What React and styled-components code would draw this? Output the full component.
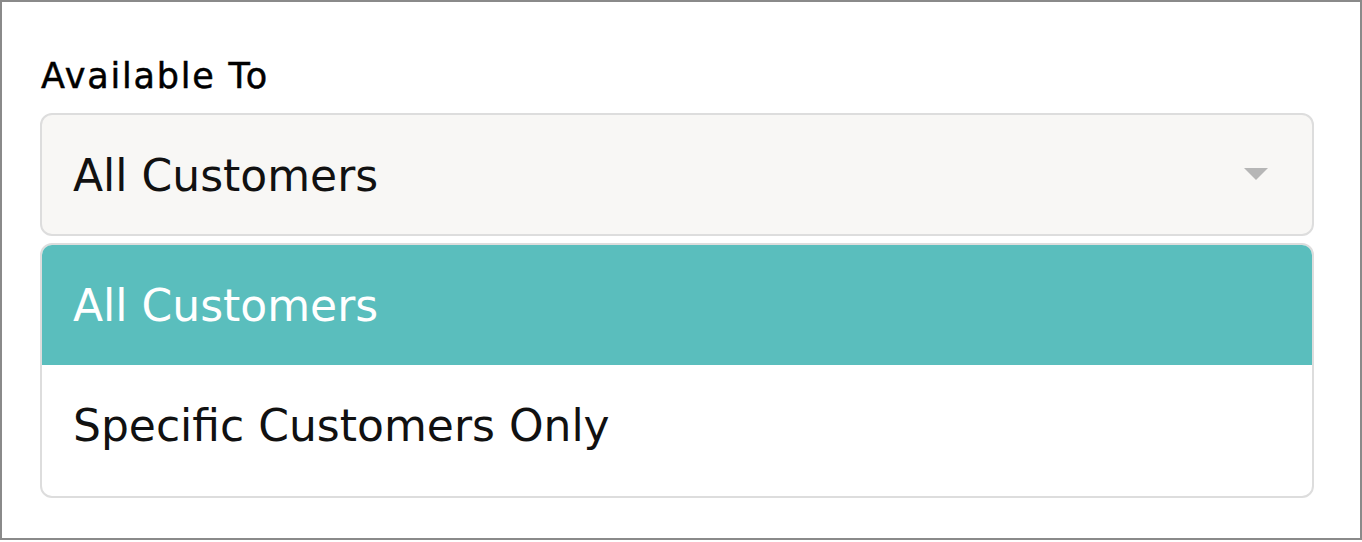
import styled, { createGlobalStyle } from "styled-components";

const GlobalStyle = createGlobalStyle`
  html, body {
    margin: 0;
    padding: 0;
    background: #fff;
  }
  body {
    font-family: "DejaVu Sans", "Noto Sans", sans-serif;
    color: #000;
  }
`;

const Frame = styled.div`
  box-sizing: border-box;
  width: 1362px;
  height: 540px;
  border: 2px solid #8a8a8a;
  padding: 50px 46px 0 38px;
`;

const Label = styled.div`
  font-size: 35px;
  line-height: 48px;
  letter-spacing: 1.8px;
  -webkit-text-stroke: 0.5px #000;
  margin-left: 1px;
  margin-bottom: 13px;
`;

const Select = styled.div`
  box-sizing: border-box;
  height: 123px;
  display: flex;
  align-items: center;
  justify-content: space-between;
  padding: 2px 44px 0 31px;
  background: #f8f7f5;
  border: 2px solid #dddddd;
  border-radius: 12px;
  font-size: 44px;
  color: #111;
`;

const Caret = styled.svg`
  width: 24px;
  height: 12px;
  display: block;
  margin-bottom: 4px;
  fill: #b6b6b6;
`;

const Menu = styled.div`
  box-sizing: border-box;
  margin-top: 7px;
  border: 2px solid #dddddd;
  border-radius: 12px;
  overflow: hidden;
  padding-bottom: 11px;
  background: #fff;
`;

const Option = styled.div`
  height: 120px;
  display: flex;
  align-items: center;
  padding-left: 31px;
  font-size: 44px;
  background: ${(p) => (p.$active ? "#5abebd" : "#fff")};
  color: ${(p) => (p.$active ? "#fff" : "#111")};
`;

const options = ["All Customers", "Specific Customers Only"];

export default function App() {
  const selected = "All Customers";
  return (
    <>
      <GlobalStyle />
      <Frame>
        <Label>Available To</Label>
        <Select>
          <span>{selected}</span>
          <Caret viewBox="0 0 24 12">
            <path d="M0 0 H24 L12 12 Z" />
          </Caret>
        </Select>
        <Menu>
          {options.map((o) => (
            <Option key={o} $active={o === selected}>
              {o}
            </Option>
          ))}
        </Menu>
      </Frame>
    </>
  );
}
